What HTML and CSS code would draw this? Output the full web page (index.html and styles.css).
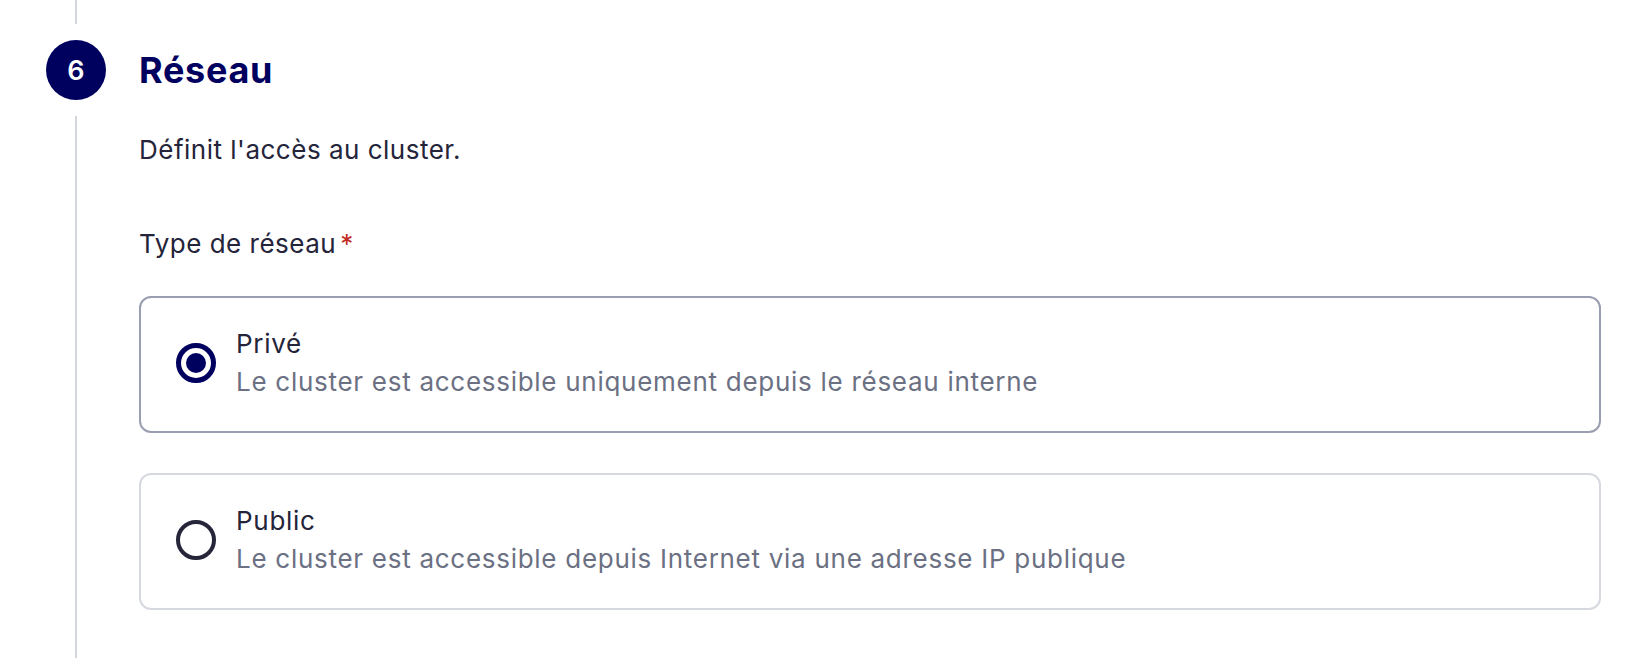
FILE: index.html
```html
<!DOCTYPE html>
<html lang="fr">
<head>
<meta charset="utf-8">
<title>Réseau</title>
<link rel="stylesheet" href="styles.css">
</head>
<body>
<section class="step">
  <div class="rail-top"></div>
  <div class="badge">6</div>
  <h2 class="title">Réseau</h2>
  <div class="rail"></div>
  <div class="content">
    <p class="desc">Définit l'accès au cluster.</p>
    <div class="label">Type de réseau<span class="req">*</span></div>
    <div class="options">
      <label class="option selected">
        <span class="radio checked"></span>
        <span class="opt-text">
          <span class="opt-title">Privé</span>
          <span class="opt-sub">Le cluster est accessible uniquement depuis le réseau interne</span>
        </span>
      </label>
      <label class="option">
        <span class="radio"></span>
        <span class="opt-text">
          <span class="opt-title">Public</span>
          <span class="opt-sub">Le cluster est accessible depuis Internet via une adresse IP publique</span>
        </span>
      </label>
    </div>
  </div>
</section>
</body>
</html>
```
FILE: styles.css
```css
html, body {
  margin: 0;
  padding: 0;
  background: #ffffff;
}
body {
  font-family: Inter, "Noto Sans", sans-serif;
  color: #24243a;
  overflow: hidden;
}
.step {
  display: grid;
  grid-template-columns: 139px 1fr;
  grid-template-rows: 24px auto 1fr;
  height: 658px;
}
.rail-top {
  grid-column: 1;
  grid-row: 1;
  width: 2px;
  margin-left: 75px;
  background: #d3d6dd;
}
.badge {
  grid-column: 1;
  grid-row: 2;
  margin: 16px 0 0 46px;
  width: 60px;
  height: 60px;
  border-radius: 50%;
  background: #00005f;
  color: #ffffff;
  display: flex;
  align-items: center;
  justify-content: center;
  font-size: 27px;
  font-weight: 600;
}
.title {
  grid-column: 2;
  grid-row: 2;
  margin: 16px 0 0;
  height: 60px;
  display: flex;
  align-items: center;
  font-size: 36px;
  font-weight: 700;
  color: #00005f;
  letter-spacing: 0.02em;
}
.rail {
  grid-column: 1;
  grid-row: 3;
  width: 2px;
  margin: 16px 0 0 75px;
  background: #d3d6dd;
}
.content {
  grid-column: 2;
  grid-row: 3;
  padding: 32px 49px 0 0;
}
.desc {
  margin: 0 0 58px;
  font-size: 26px;
  line-height: 36px;
  letter-spacing: 0.5px;
}
.label {
  font-size: 26px;
  line-height: 36px;
  letter-spacing: 0.5px;
  margin-bottom: 34px;
}
.req {
  color: #c0281c;
  margin-left: 4px;
}
.options {
  display: flex;
  flex-direction: column;
  gap: 40px;
}
.option {
  display: flex;
  align-items: center;
  gap: 20px;
  padding: 28px 35px 31px;
  border: 2px solid #d6d9df;
  border-radius: 12px;
}
.option.selected {
  border-color: #999eb0;
}
.radio {
  flex: none;
  width: 40px;
  height: 40px;
  box-sizing: border-box;
  border: 4px solid #26263b;
  border-radius: 50%;
  display: flex;
  align-items: center;
  justify-content: center;
}
.radio.checked {
  border: 5px solid #00005f;
}
.radio.checked::after {
  content: "";
  width: 20px;
  height: 20px;
  border-radius: 50%;
  background: #00005f;
}
.opt-text {
  display: flex;
  flex-direction: column;
  gap: 2px;
}
.opt-title {
  font-size: 26px;
  line-height: 36px;
  letter-spacing: 0.7px;
  color: #24243a;
}
.opt-sub {
  font-size: 26px;
  line-height: 36px;
  letter-spacing: 0.72px;
  color: #6b7083;
}
```
